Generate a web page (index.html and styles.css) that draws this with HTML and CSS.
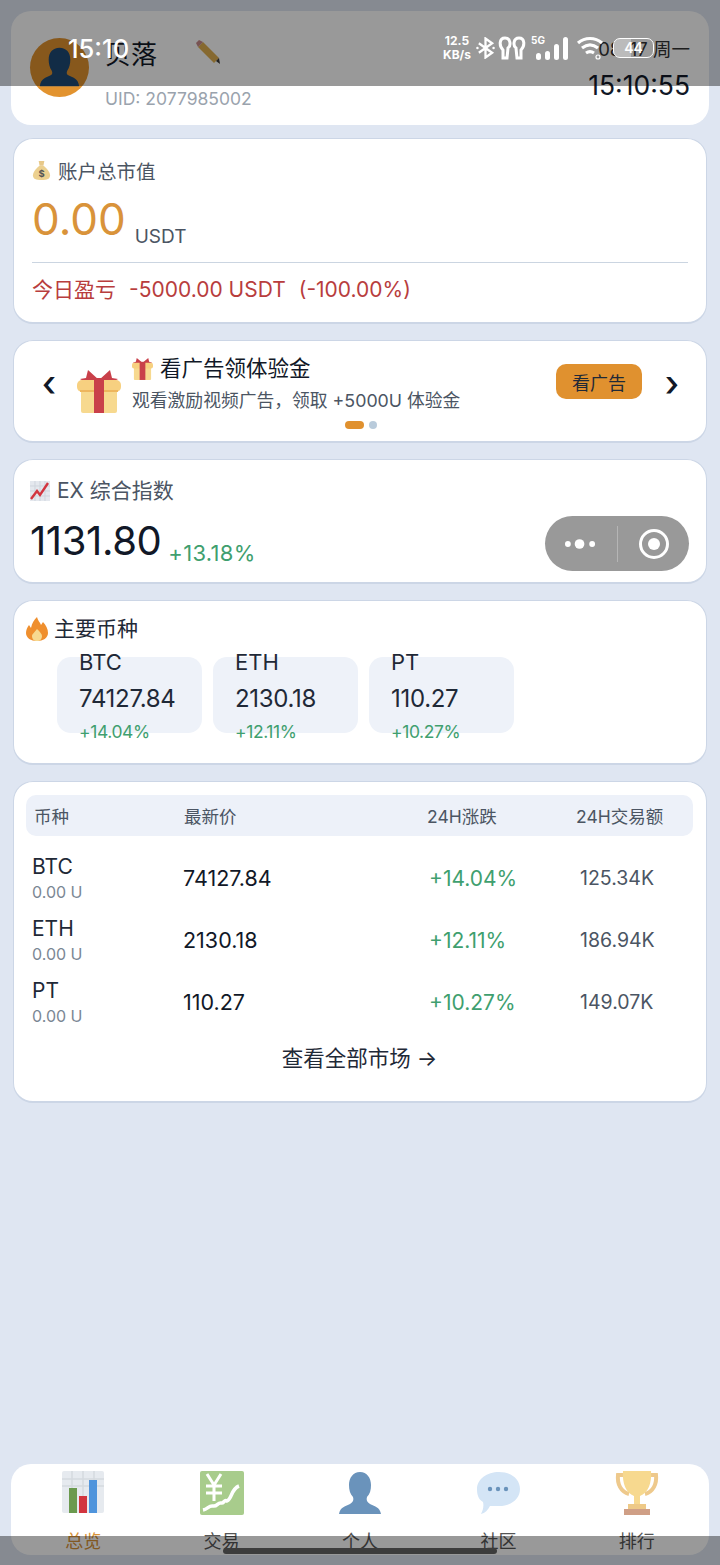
FILE: index.html
```html
<!DOCTYPE html>
<html lang="zh">
<head>
  <meta charset="UTF-8" />
  <meta name="viewport" content="width=device-width, initial-scale=1.0"/>
  <title>总览</title>
  <link rel="stylesheet" href="styles.css">
</head>
<body>
  <div class="page">
    <div class="header">
      <div class="avatar">
        <svg viewBox="0 0 60 60" width="59" height="59"><path fill="#1f4a75" d="M30 10c-7 0-11 5-11 12 0 4 1 8 3 11 1 2 1 4-1 5-4 2-10 3-11 11h40c-1-8-7-9-11-11-2-1-2-3-1-5 2-3 3-7 3-11 0-7-4-12-11-12z"/></svg>
      </div>
      <div class="user">
        <div class="name-row">
          <span class="name">贝落</span>
          <svg class="pencil" viewBox="0 0 26 26" width="26" height="26"><path fill="#e0b050" d="M8 3l16 16-5 5L3 8z"/><path fill="#c98a8a" d="M1 4l3-3 4 2-5 5z"/><path fill="#3a3a3a" d="M21 22l3-3 1 6z"/></svg>
        </div>
        <div class="uid">UID: 2077985002</div>
      </div>
      <div class="clock">
        <div class="date">08-17 周一</div>
        <div class="time">15:10:55</div>
      </div>
    </div>

    <div class="card assets">
      <div class="label">
        <svg viewBox="0 0 20 22" width="19" height="21"><path fill="#e8c98a" d="M7 1h6l-1 5H8z"/><path fill="#ecd08f" d="M8 6h4c4 3 7 7 7 10 0 4-3 5-9 5s-9-1-9-5c0-3 3-7 7-10z"/><text x="10" y="18" class="bag-sign">$</text></svg>
        <span>账户总市值</span>
      </div>
      <div class="balance"><span class="amount">0.00</span><span class="unit">USDT</span></div>
      <div class="today">
        <span>今日盈亏</span><span>-5000.00 USDT</span><span>(-100.00%)</span>
      </div>
    </div>

    <div class="card promo">
      <div class="promo-row">
        <span class="arrow">‹</span>
        <svg viewBox="0 0 44 44" width="44" height="44"><path fill="#c9404a" d="M22 11L11 1l-2 8-6 1 7 4zM22 11L33 1l2 8 6 1-7 4z"/><rect x="4" y="20" width="36" height="24" rx="2" fill="#f7d98f"/><rect y="11" width="44" height="12" rx="5" fill="#f7d080"/><rect y="21" x="3" width="38" height="2" fill="#eeb65e"/><rect x="17" y="9" width="10" height="35" fill="#c9404a"/></svg>
        <div class="promo-text">
          <div class="promo-title">
            <svg viewBox="0 0 22 24" width="21" height="23"><path fill="#c9404a" d="M11 6L5 1 4 5 1 6l4 2zM11 6l6-5 1 4 3 1-4 2z"/><rect x="2" y="10" width="18" height="14" rx="1" fill="#f7d98f"/><rect y="6" width="22" height="6" rx="2" fill="#f7d080"/><rect x="8" y="5" width="6" height="19" fill="#c9404a"/></svg>
            <span>看广告领体验金</span>
          </div>
          <div class="promo-sub">观看激励视频广告，领取 +5000U 体验金</div>
        </div>
        <button class="watch">看广告</button>
        <span class="arrow">›</span>
      </div>
      <div class="dots"><i class="dot on"></i><i class="dot"></i></div>
    </div>

    <div class="card index">
      <div class="label index-label">
        <svg viewBox="0 0 20 20" width="20" height="20"><rect width="20" height="20" fill="#e4e8ee"/><path fill="none" stroke="#cfd5dd" stroke-width="1" d="M0 5h20M0 10h20M0 15h20M5 0v20M10 0v20M15 0v20"/><path fill="none" stroke="#d2353f" stroke-width="2.4" d="M1 18l6-8 3 4 8-12"/></svg>
        <span>EX 综合指数</span>
      </div>
      <div class="index-row"><span class="index-value">1131.80</span><span class="index-change">+13.18%</span></div>
      <div class="capsule">
        <svg viewBox="0 0 34 12" width="33" height="12"><circle cx="4" cy="6" r="3" fill="#fff"/><circle cx="16" cy="6" r="5" fill="#fff"/><circle cx="29" cy="6" r="3" fill="#fff"/></svg>
        <i class="capsule-line"></i>
        <svg viewBox="0 0 32 32" width="32" height="32"><circle cx="16" cy="16" r="13.5" fill="none" stroke="#fff" stroke-width="3"/><circle cx="16" cy="16" r="6" fill="#fff"/></svg>
      </div>
    </div>

    <div class="card coins">
      <div class="coins-title">
        <svg viewBox="0 0 22 24" width="22" height="24"><path fill="#ef8f2e" d="M11 0c1 4 3 5 4 8l2-3c3 3 5 7 5 11 0 5-5 8-11 8S0 21 0 16c0-3 1-5 3-8l2 3c1-5 3-8 6-11z"/><path fill="#f7d98f" d="M11 12c3 3 5 5 5 7 0 3-2 5-5 5s-5-2-5-5c0-2 3-4 5-7z"/></svg>
        <span>主要币种</span>
      </div>
      <div class="chips">
        <div class="chip"><div class="chip-name">BTC</div><div class="chip-price">74127.84</div><div class="chip-change">+14.04%</div></div>
        <div class="chip"><div class="chip-name">ETH</div><div class="chip-price">2130.18</div><div class="chip-change">+12.11%</div></div>
        <div class="chip"><div class="chip-name">PT</div><div class="chip-price">110.27</div><div class="chip-change">+10.27%</div></div>
      </div>
    </div>

    <div class="card market">
      <div class="market-head"><span>币种</span><span>最新价</span><span>24H涨跌</span><span>24H交易额</span></div>
      <div class="market-row">
        <div><div class="sym">BTC</div><div class="hold">0.00 U</div></div>
        <div class="price">74127.84</div><div class="change">+14.04%</div><div class="vol">125.34K</div>
      </div>
      <div class="market-row">
        <div><div class="sym">ETH</div><div class="hold">0.00 U</div></div>
        <div class="price">2130.18</div><div class="change">+12.11%</div><div class="vol">186.94K</div>
      </div>
      <div class="market-row">
        <div><div class="sym">PT</div><div class="hold">0.00 U</div></div>
        <div class="price">110.27</div><div class="change">+10.27%</div><div class="vol">149.07K</div>
      </div>
      <div class="more">查看全部市场 →</div>
    </div>

    <div class="tabbar">
      <div class="tab active">
        <svg viewBox="0 0 42 44" width="42" height="44"><rect width="42" height="42" rx="2" fill="#e6eaef"/><path fill="none" stroke="#d5dae0" stroke-width="1.5" d="M0 8h42M0 15h42M10 0v42M21 0v42M32 0v42"/><rect x="7" y="17" width="8" height="25" fill="#6b9a4f"/><rect x="17" y="25" width="8" height="17" fill="#d2353f"/><rect x="27" y="9" width="8" height="33" fill="#4f94dc"/></svg>
        <span>总览</span>
      </div>
      <div class="tab">
        <svg viewBox="0 0 44 44" width="44" height="44"><rect width="44" height="44" rx="2" fill="#a8cc8c"/><path fill="none" stroke="#fff" stroke-width="3" d="M7 3l7 11 7-11M14 14v16M6 15h16M6 22h16"/><path fill="none" stroke="#fff" stroke-width="3.5" d="M3 39c5-1 6-5 10-4s5-4 8-3 3-4 6-2c5-2 4-12 12-15"/></svg>
        <span>交易</span>
      </div>
      <div class="tab">
        <svg viewBox="0 0 44 44" width="44" height="44"><path fill="#6a93bb" d="M22 1c-7 0-11 6-11 13 0 5 1 9 4 12 1 3 0 5-3 7-4 2-10 3-11 10h42c-1-7-7-8-11-10-3-2-4-4-3-7 3-3 4-7 4-12 0-7-4-13-11-13z"/></svg>
        <span>个人</span>
      </div>
      <div class="tab">
        <svg viewBox="0 0 46 44" width="46" height="44"><path fill="#d4e5f6" d="M24 1c12 0 21 7 21 17s-9 17-21 17c-4 0-6 0-9 0-2 4-5 7-9 8 2-4 3-8 2-12C3 28 2 23 2 18 2 8 12 1 24 1z"/><circle cx="15" cy="18" r="2.2" fill="#6a93bb"/><circle cx="23" cy="18" r="2.2" fill="#6a93bb"/><circle cx="31" cy="18" r="2.2" fill="#6a93bb"/></svg>
        <span>社区</span>
      </div>
      <div class="tab">
        <svg viewBox="0 0 44 44" width="44" height="44"><path fill="none" stroke="#eec98c" stroke-width="4" d="M9 4H3c-1 9 3 17 11 19M35 4h6c1 9-3 17-11 19"/><path fill="#f7d98f" d="M8 0h28c1 12-3 22-11 25v8h-6v-8C11 22 7 12 8 0z"/><rect x="13" y="33" width="18" height="5" fill="#eec987"/><rect x="9" y="38" width="26" height="6" fill="#cf9f86"/></svg>
        <span>排行</span>
      </div>
    </div>
  </div>

  <div class="status-shade">
    <span class="status-time">15:10</span>
    <div class="status-icons">
      <div class="speed"><b>12.5</b><b>KB/s</b></div>
      <svg class="bt" viewBox="0 0 20 22" width="19" height="22"><path fill="none" stroke="#fff" stroke-width="2.4" d="M3 6l14 10-7 5V1l7 5L3 16"/><circle cx="1.5" cy="11" r="1.3" fill="#fff"/><circle cx="18.5" cy="11" r="1.3" fill="#fff"/></svg>
      <svg class="pods" viewBox="0 0 28 24" width="28" height="24"><path fill="none" stroke="#fff" stroke-width="3" d="M5 22V14C1 10 1 2 7 2c6 0 6 8 3 10l-1 10zM23 22V14c4-4 4-12-2-12-6 0-6 8-3 10l1 10z"/></svg>
      <div class="signal">
        <span class="five-g">5G</span>
        <i class="bar b1"></i><i class="bar b2"></i><i class="bar b3"></i><i class="bar b4"></i>
      </div>
      <svg class="wifi" viewBox="0 0 28 24" width="28" height="24"><path fill="none" stroke="#fff" stroke-width="3.2" d="M2 7c7-6 17-6 24 0M6 12c5-4 11-4 16 0M10 17c3-2 5-2 8 0"/><circle cx="22" cy="21" r="2" fill="none" stroke="#fff" stroke-width="1.2"/></svg>
      <div class="battery"><span>44</span></div>
    </div>
  </div>
  <div class="bottom-shade"><i class="home-bar"></i></div>
</body>
</html>
```

FILE: styles.css
```css
* {
  box-sizing: border-box;
}

body {
  margin: 0;
  background: #dfe6f2;
  font-family: Inter, "Noto Sans CJK SC", sans-serif;
  color: #111827;
}

.page {
  height: 1565px;
  padding: 11px 13px 10px;
  display: flex;
  flex-direction: column;
  gap: 16px;
  overflow: hidden;
}

.card {
  background: #fff;
  border: 1px solid #ccd6e6;
  border-bottom-width: 2px;
  border-radius: 20px;
  position: relative;
}

.header {
  height: 114px;
  margin: 0 -2px -3px;
  padding: 27px 19px 0;
  background: #fff;
  border-radius: 20px;
  display: flex;
  gap: 16px;
}

.avatar {
  width: 59px;
  height: 59px;
  border-radius: 50%;
  background: #e2932f;
  overflow: hidden;
}

.user {
  flex: 1;
  margin-top: -2px;
}

.name-row {
  display: flex;
  align-items: center;
  gap: 38px;
  height: 32px;
}

.name {
  font-size: 26px;
}

.uid {
  margin-top: 20px;
  font-size: 17.5px;
  color: #9aa3ad;
}

.clock {
  text-align: right;
}

.date {
  font-size: 18.5px;
  line-height: 22px;
  color: #333;
}

.time {
  margin-top: 9px;
  font-size: 26.5px;
  line-height: 32px;
}

.label {
  display: flex;
  align-items: center;
  gap: 7px;
  font-size: 19.5px;
  color: #4b5563;
}

.bag-sign {
  font-size: 10px;
  font-weight: 700;
  text-anchor: middle;
  fill: #555;
}

.assets {
  height: 186px;
  padding: 17px 18px 0;
}

.balance {
  display: flex;
  align-items: flex-end;
  gap: 9px;
  height: 59px;
  margin-top: 8px;
  padding-bottom: 2px;
}

.amount {
  margin-bottom: 5px;
  font-size: 44px;
  line-height: 52px;
  color: #d9933a;
}

.unit {
  font-size: 19px;
  line-height: 26px;
  color: #4b5563;
}

.today {
  display: flex;
  gap: 13px;
  margin-top: 10px;
  padding-top: 13px;
  border-top: 1px solid #cbd5e1;
  font-size: 21px;
  line-height: 28px;
  color: #b83d3d;
}

.promo {
  height: 103px;
  padding: 10px 25px 0 26px;
}

.promo-row {
  display: flex;
  align-items: center;
  height: 67px;
}

.arrow {
  width: 18px;
  margin-bottom: 4px;
  font-size: 36px;
  line-height: 36px;
  font-weight: 500;
  text-align: center;
}

.promo-row > svg {
  margin: 12px 11px 0 19px;
}

.promo-text {
  flex: 1;
  margin-bottom: 2px;
}

.promo-title {
  display: flex;
  align-items: center;
  gap: 7px;
  font-size: 21.5px;
  line-height: 30px;
}

.promo-sub {
  margin-top: 5px;
  font-size: 17.8px;
  line-height: 26px;
  color: #4b5563;
}

.watch {
  width: 86px;
  height: 35px;
  margin: 0 21px 6px 0;
  padding: 0;
  border: 0;
  border-radius: 10px;
  background: #e0912f;
  font: inherit;
  font-size: 18px;
  color: #1f2937;
}

.dots {
  display: flex;
  justify-content: center;
  gap: 5px;
  margin-top: 3px;
}

.dot {
  width: 8px;
  height: 8px;
  border-radius: 4px;
  background: #b9cbdb;
}

.dot.on {
  width: 19px;
  background: #e0912f;
}

.index {
  height: 125px;
  padding: 17px 16px 0;
}

.index-label {
  font-size: 21px;
  line-height: 28px;
}

.index-row {
  display: flex;
  align-items: flex-end;
  gap: 7px;
  margin-top: 6px;
}

.index-value {
  font-size: 40px;
  line-height: 60px;
  letter-spacing: -0.4px;
}

.index-change {
  margin-bottom: 3px;
  font-size: 22px;
  line-height: 30px;
  letter-spacing: 0.3px;
  color: #3f9f6f;
}

.capsule {
  position: absolute;
  left: 531px;
  top: 56px;
  width: 144px;
  height: 55px;
  border-radius: 28px;
  background: #999;
  display: flex;
  align-items: center;
}

.capsule > svg:first-child {
  margin-left: 19px;
}

.capsule-line {
  width: 1px;
  height: 36px;
  margin: 0 20px;
  background: #b5b5b5;
}

.coins {
  height: 165px;
  padding: 14px 12px 0;
}

.coins-title {
  display: flex;
  align-items: center;
  gap: 6px;
  font-size: 21px;
  line-height: 28px;
  color: #1f2937;
}

.chips {
  display: flex;
  gap: 11px;
  margin: 14px 0 0 31px;
}

.chip {
  width: 145px;
  height: 76px;
  padding-left: 22px;
  border-radius: 14px;
  background: #eef2f9;
  display: flex;
  flex-direction: column;
  justify-content: center;
}

.chip-name {
  margin-top: 2px;
  font-size: 22px;
  line-height: 26px;
  color: #1f2937;
}

.chip-price {
  margin-top: 9px;
  font-size: 24px;
  line-height: 30px;
  letter-spacing: -0.3px;
  color: #1f2937;
}

.chip-change {
  margin-top: 7px;
  font-size: 17.5px;
  line-height: 22px;
  letter-spacing: -0.4px;
  color: #3f9f6f;
}

.market {
  height: 322px;
  padding: 13px 13px 0 12px;
}

.market-head {
  display: grid;
  grid-template-columns: 150px 243px 149px 1fr;
  align-items: center;
  height: 41px;
  padding-left: 8px;
  border-radius: 10px;
  background: #edf1f9;
  font-size: 17.5px;
  color: #4b5563;
}

.market-row {
  display: grid;
  grid-template-columns: 151px 246px 151px 1fr;
  align-items: center;
  height: 62px;
  padding-left: 6px;
}

.market-head + .market-row {
  margin-top: 11px;
}

.sym {
  font-size: 21px;
  line-height: 28px;
  color: #1f2937;
}

.hold {
  font-size: 16px;
  line-height: 22px;
  color: #7b8794;
}

.price {
  font-size: 21.5px;
}

.change {
  font-size: 21px;
  color: #3f9f6f;
}

.vol {
  font-size: 19.5px;
  color: #4b5563;
}

.more {
  margin-top: 11px;
  text-align: center;
  font-size: 21.5px;
  line-height: 28px;
  color: #1f2937;
}

.tabbar {
  height: 91px;
  margin: auto -2px 0;
  padding: 7px 3px 0;
  background: #fff;
  border-radius: 20px;
  display: grid;
  grid-template-columns: repeat(5, 1fr);
}

.tab {
  display: flex;
  flex-direction: column;
  align-items: center;
  gap: 15px;
  font-size: 18px;
  line-height: 24px;
  color: #555;
}

.tab.active {
  color: #d9933a;
}

.status-shade {
  position: absolute;
  top: 0;
  left: 0;
  width: 720px;
  height: 86px;
  background: rgba(0, 0, 0, 0.4);
}

.status-time {
  position: absolute;
  left: 68px;
  top: 34px;
  font-size: 25.5px;
  line-height: 29px;
  font-weight: 500;
  color: #fff;
}

.status-icons {
  position: absolute;
  left: 443px;
  top: 34px;
  display: flex;
  align-items: center;
}

.speed {
  display: flex;
  flex-direction: column;
  width: 28px;
  font-size: 12px;
  line-height: 14px;
  color: #fff;
  text-align: center;
}

.bt {
  margin-left: 5px;
}

.pods {
  margin-left: 3px;
}

.signal {
  position: relative;
  width: 37px;
  height: 24px;
  margin-left: 5px;
  display: flex;
  align-items: flex-end;
  justify-content: flex-end;
  gap: 4px;
}

.five-g {
  position: absolute;
  left: 0;
  top: -2px;
  font-size: 10px;
  font-weight: 700;
  color: #fff;
}

.bar {
  width: 5px;
  border-radius: 2.5px;
  background: #fff;
}

.b1 { height: 7px; }
.b2 { height: 9px; }
.b3 { height: 16px; }
.b4 { height: 23px; }

.wifi {
  margin-left: 8px;
}

.battery {
  width: 41px;
  height: 20px;
  margin-left: 9px;
  border: 1.5px solid #fff;
  border-radius: 7px;
  background: linear-gradient(90deg, #bbb 44%, transparent 44%);
  font-size: 14px;
  line-height: 17px;
  font-weight: 600;
  text-align: center;
  color: #fff;
}

.bottom-shade {
  position: absolute;
  top: 1536px;
  left: 0;
  width: 720px;
  height: 29px;
  background: rgba(0, 0, 0, 0.4);
}

.home-bar {
  position: absolute;
  left: 223px;
  top: 12px;
  width: 274px;
  height: 6px;
  border-radius: 3px;
  background: #3c3c3c;
}
```
